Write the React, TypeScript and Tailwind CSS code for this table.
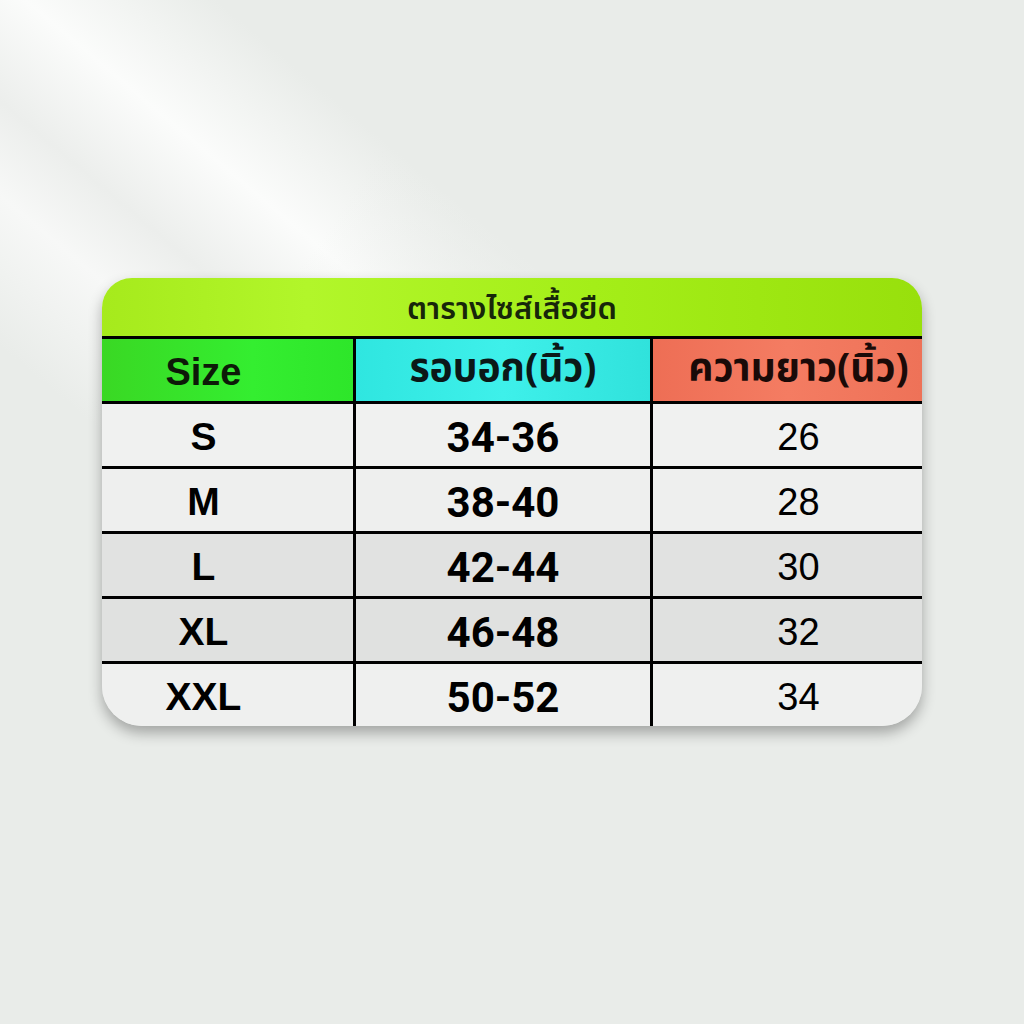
const rows = [
  { size: 'S', chest: '34-36', length: '26', bg: 'bg-[#f0f1f0]' },
  { size: 'M', chest: '38-40', length: '28', bg: 'bg-[#eeefee]' },
  { size: 'L', chest: '42-44', length: '30', bg: 'bg-[#e1e2e1]' },
  { size: 'XL', chest: '46-48', length: '32', bg: 'bg-[#e0e1e0]' },
  { size: 'XXL', chest: '50-52', length: '34', bg: 'bg-[#eff0ef]' },
];

const thai = "font-['Noto_Sans_Thai','Noto_Sans','Liberation_Sans',sans-serif]";

export default function App() {
  return (
    <div className="w-[1024px] h-[1024px] flex items-start justify-center pt-[278px] bg-[radial-gradient(circle_at_0_0,transparent_400px,#e9ece9_720px),linear-gradient(220deg,#e9ece9_36%,#fbfcfb_44.5%,#eceeec_51%,#f7f8f7_56%,#e9ece9_64%)]">
      <div className="w-[820px] rounded-t-[30px] rounded-b-[40px] overflow-hidden shadow-[0_7px_14px_rgba(0,0,0,0.3)]">
        {/* Title band */}
        <div className="h-[58px] flex items-center justify-center bg-[linear-gradient(90deg,#a6ea1c_0%,#b2f62a_25%,#a4ee18_60%,#98e00c_100%)]">
          <span className={`${thai} text-[31px] font-semibold text-[#17260a] mt-[6px]`}>ตารางไซส์เสื้อยืด</span>
        </div>

        {/* Table */}
        <div className="grid grid-cols-[251px_297px_272px] border-t-[3px] border-black">
          <div className="h-[65px] border-b-[3px] border-black flex items-center justify-center pr-[48px] bg-[linear-gradient(90deg,#3ad824,#34ee30_60%,#2ee62a)]">
            <span className="font-['Liberation_Sans',sans-serif] font-bold text-[38px] text-[#0d1a08] mt-[4px]">Size</span>
          </div>
          <div className="h-[65px] border-b-[3px] border-l-[3px] border-black flex items-center justify-center bg-[linear-gradient(90deg,#2fe6e0,#3ef0ea_50%,#30e2dc)]">
            <span className={`${thai} font-bold text-[39px] text-[#0b1818]`}>รอบอก(นิ้ว)</span>
          </div>
          <div className="h-[65px] border-b-[3px] border-l-[3px] border-black flex items-center justify-center pl-[22px] bg-[linear-gradient(90deg,#ee6e55,#f47c62_50%,#ee7258)]">
            <span className={`${thai} font-bold text-[39px] text-[#1a0a08]`}>ความยาว(นิ้ว)</span>
          </div>

          {rows.map((r, i) => {
            const last = i === rows.length - 1;
            const h = last ? 'h-[62px]' : 'h-[65px] border-b-[3px]';
            return (
              <div key={r.size} className="contents">
                <div className={`${h} ${r.bg} border-black flex items-center justify-center pr-[48px]`}>
                  <span className="font-['Liberation_Sans',sans-serif] font-bold text-[39px] text-black mt-[4px]">{r.size}</span>
                </div>
                <div className={`${h} ${r.bg} border-l-[3px] border-black flex items-center justify-center`}>
                  <span className="font-['Roboto',sans-serif] font-bold text-[42px] text-black mt-[4px]">{r.chest}</span>
                </div>
                <div className={`${h} ${r.bg} border-l-[3px] border-black flex items-center justify-center pl-[22px]`}>
                  <span className="font-['Liberation_Sans',sans-serif] text-[38px] text-black mt-[4px]">{r.length}</span>
                </div>
              </div>
            );
          })}
        </div>
      </div>
    </div>
  );
}
